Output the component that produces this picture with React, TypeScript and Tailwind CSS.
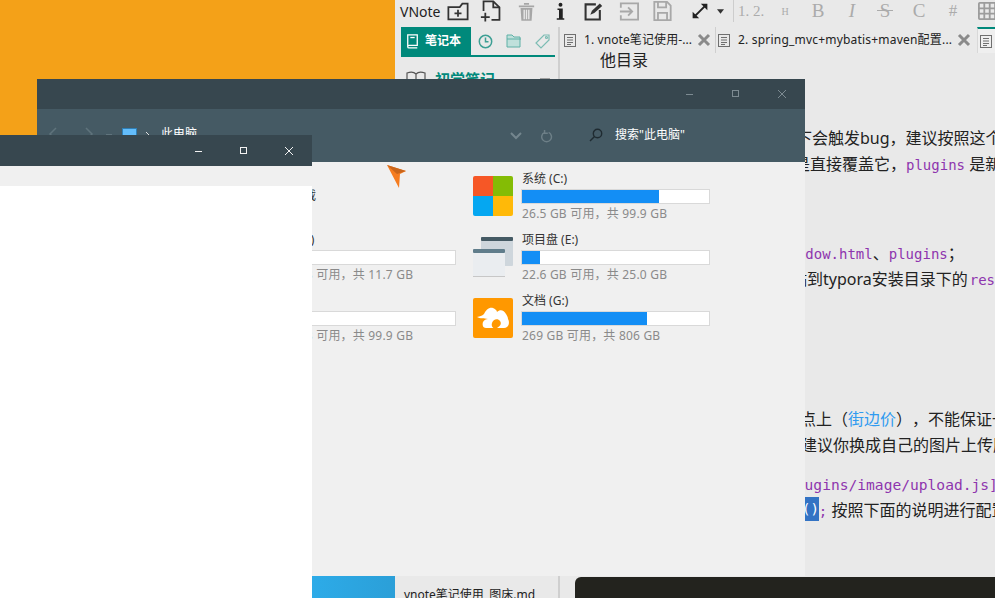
import React from 'react';

const ui = 'font-["Noto_Sans","Noto_Sans_CJK_SC",sans-serif]';
const mono = 'font-["DejaVu_Sans_Mono","Noto_Sans_CJK_SC",monospace] text-[14px] text-[#8e35ae]';

function DocIcon() {
  return (
    <svg width="14" height="16" viewBox="0 0 14 16" fill="none" stroke="#6f6f6f" strokeWidth="1" className="shrink-0">
      <rect x="1.5" y="2.5" width="11" height="12" />
      <path d="M4 5.5h6M4 8h6M4 10.5h6M4 12.5h4" />
    </svg>
  );
}

function CloseIcon() {
  return (
    <svg width="14" height="14" viewBox="0 0 14 14" stroke="#8a8a8a" strokeWidth="3" className="shrink-0">
      <path d="M2 2l10 10M12 2L2 12" />
    </svg>
  );
}

function ToolBox({ w, className, children }: { w: number; className?: string; children: React.ReactNode }) {
  return (
    <div className={`flex shrink-0 items-center justify-center ${className ?? ''}`} style={{ width: w }}>
      {children}
    </div>
  );
}

function Toolbar() {
  const label = 'font-["Liberation_Serif",serif] text-[#ababab]';
  return (
    <div className="flex h-[22px] items-center">
      <span className="w-[46px] shrink-0 pl-[5px] text-[14px] text-[#222]">VNote</span>
      <ToolBox w={34}>
        <svg width="24" height="21" viewBox="0 0 26 24" fill="none" stroke="#333" strokeWidth="2">
          <path d="M2 7h13l3-4h6v18H2z" />
          <path d="M9 14h8M13 10v8" />
        </svg>
      </ToolBox>
      <ToolBox w={33}>
        <svg width="23" height="22" viewBox="0 0 26 24" fill="none" stroke="#333" strokeWidth="2">
          <path d="M4 12V1h11l7 7v14h-9" />
          <path d="M15 1v7h7" />
          <path d="M1 19h10M6 14v10" />
        </svg>
      </ToolBox>
      <ToolBox w={36}>
        <svg width="17" height="19" viewBox="0 0 20 22" fill="#a6a6a6">
          <path d="M1 4h18v2H1zM7 1h6v2H7z" />
          <path d="M3 7h14l-1 15H4zM6.500 9v11h1.600V9zM9.200 9v11h1.600V9zM11.900 9v11h1.600V9z" fillRule="evenodd" />
        </svg>
      </ToolBox>
      <ToolBox w={32}>
        <svg width="9" height="21" viewBox="0 0 12 24" fill="#222">
          <circle cx="6" cy="3" r="2.600" />
          <path d="M2 8h7v13h2v2H1v-2h3V10H2z" />
        </svg>
      </ToolBox>
      <ToolBox w={35}>
        <svg width="19" height="19" viewBox="0 0 24 24" fill="none" stroke="#333" strokeWidth="2.600">
          <path d="M15 3H2v19h18V10" />
          <path d="M8 16l2-5L20 2l3 3-10 9z" fill="#333" stroke="none" />
        </svg>
      </ToolBox>
      <ToolBox w={35}>
        <svg width="20" height="19" viewBox="0 0 22 20" fill="none" stroke="#a8a8a8" strokeWidth="2">
          <path d="M2 6V1h19v18H2v-5" />
          <path d="M1 10h13M10 5.500l4.500 4.500-4.500 4.500" />
        </svg>
      </ToolBox>
      <ToolBox w={33}>
        <svg width="19" height="20" viewBox="0 0 20 22" fill="none" stroke="#a8a8a8" strokeWidth="2">
          <path d="M1 1h14l4 4v16H1z" />
          <path d="M5 1v6h9V1M5 21v-8h10v8" />
        </svg>
      </ToolBox>
      <ToolBox w={33} className="ml-[4px]">
        <svg width="18" height="18" viewBox="0 0 22 22" fill="#222" stroke="#222">
          <path d="M5 17L17 5" strokeWidth="2.400" />
          <path d="M12 2h8v8zM2 12v8h8z" stroke="none" />
        </svg>
      </ToolBox>
      <ToolBox w={8}>
        <svg width="7" height="5" viewBox="0 0 8 5" fill="#333">
          <path d="M0 0h8L4 5z" />
        </svg>
      </ToolBox>
      <div className="ml-[9px] h-[22px] w-px shrink-0 bg-[#cdcdcd]" />
      <span className={`ml-[4px] w-[39px] shrink-0 text-[15px] ${label}`}>1. 2.</span>
      <span className={`w-[16px] shrink-0 text-center text-[10px] ${label}`}>H</span>
      <span className={`ml-[17px] w-[16px] shrink-0 text-center text-[19px] ${label}`}>B</span>
      <span className={`ml-[18px] w-[16px] shrink-0 text-center text-[19px] italic ${label}`}>I</span>
      <span className={`relative ml-[17px] w-[16px] shrink-0 text-center text-[19px] ${label}`}>
        S
        <span className="absolute top-[13px] left-0 h-px w-[16px] bg-[#ababab]" />
      </span>
      <span className={`ml-[18px] w-[16px] shrink-0 text-center text-[19px] ${label}`}>C</span>
      <span className={`ml-[18px] w-[16px] shrink-0 text-center text-[17px] ${label}`}>#</span>
      <div className="ml-[17px] shrink-0">
        <svg width="18" height="18" viewBox="0 0 20 20" fill="none" stroke="#9c9c9c" strokeWidth="2">
          <rect x="1" y="1" width="18" height="18" rx="1" />
          <path d="M7 1v18M13 1v18M1 7h18M1 13h18" />
        </svg>
      </div>
    </div>
  );
}

function SidePanel() {
  return (
    <div className="flex w-[163px] shrink-0 flex-col">
      <div className="ml-[6px] flex h-[30px] w-[154px] border-b-2 border-[#00897b]">
        <div className="flex h-[28px] w-[70px] shrink-0 items-center gap-[6px] whitespace-nowrap bg-[#00897b] pl-[5px] text-[12px] font-bold text-white">
          <svg width="13" height="16" viewBox="0 0 15 18" fill="none" stroke="#fff" strokeWidth="1.500" className="shrink-0">
            <path d="M2 16V2h11v12H3.500a1.500 1.500 0 0 0 0 3H13" />
            <path d="M5 5h5" />
          </svg>
          <span>笔记本</span>
        </div>
        <div className="flex h-[28px] items-center gap-[13px] pl-[7px]">
          <svg width="15" height="15" viewBox="0 0 15 15" fill="none" stroke="#3d9f94" strokeWidth="1.500">
            <circle cx="7.500" cy="7.500" r="6.200" />
            <path d="M7.500 3.500v4.300h3" />
          </svg>
          <svg width="16" height="14" viewBox="0 0 16 14" fill="#bfe0db" stroke="#5fb0a6" strokeWidth="1">
            <path d="M1 13V1h5l2 2h6v10z" />
            <path d="M1 5h14" fill="none" />
          </svg>
          <svg width="15" height="15" viewBox="0 0 15 15" fill="none" stroke="#7cbcb3" strokeWidth="1.200">
            <path d="M9 1h5v5l-8 8-5-5z" />
            <circle cx="11.500" cy="3.500" r="1" />
          </svg>
        </div>
      </div>
      <div className="mt-[12px] flex items-center">
        <svg className="ml-[11px]" width="20" height="16" viewBox="0 0 20 16" fill="none" stroke="#555" strokeWidth="1.200">
          <path d="M10 3C8 1 4 1 1 2v13c3-1 7-1 9 0 2-1 6-1 9 0V2c-3-1-7-1-9 1v12" />
        </svg>
        <span className="ml-[9px] text-[15px] font-bold leading-[20px] text-[#00897b]">初学笔记</span>
        <div className="mt-[1px] ml-[45px] h-[3px] w-[10px] bg-[#a0a0a0]" />
      </div>
      <div className="mt-auto h-[12px] pl-[9px] text-[12px] leading-[18px] whitespace-nowrap text-[#222]">
        vnote笔记使用_图床.md
      </div>
    </div>
  );
}

function Tabs() {
  return (
    <div className="flex h-[26px]">
      <div className="flex w-[156px] items-center border-r border-[#cfcfcf] pl-[3px]">
        <DocIcon />
        <span className="ml-[7px] w-[113px] whitespace-nowrap text-[12px] tracking-[0.1px] text-[#222]">1. vnote笔记使用-...</span>
        <CloseIcon />
      </div>
      <div className="flex w-[261px] items-center pl-[1px]">
        <DocIcon />
        <span className="ml-[7px] w-[219px] whitespace-nowrap text-[12px] tracking-[0.2px] text-[#222]">2. spring_mvc+mybatis+maven配置...</span>
        <CloseIcon />
      </div>
      <div className="flex flex-1 items-center border-t-2 border-l border-t-[#00897b] border-l-[#d8d8d8] bg-[#efefef] pl-[1px]">
        <DocIcon />
      </div>
    </div>
  );
}

function Content() {
  const line = 'h-[26px] whitespace-nowrap leading-[26px]';
  return (
    <div className="absolute top-[47px] left-0 text-[16px] text-[#222] [text-spacing-trim:space-all]">
      <div className={`${line} ml-[205px]`}>他目录</div>
      <div className={`${line} ml-[401px] mt-[52px]`}>下会触发bug，建议按照这个</div>
      <div className={`${line} ml-[399px]`}>
        是直接覆盖它，<span className={mono}>plugins</span> 是新
      </div>
      <div className={`${line} ml-[385px] mt-[63px]`}>
        <span className={mono}>window.html</span>、<span className={mono}>plugins</span>；
      </div>
      <div className={`${line} ml-[380px]`}>
        粘贴到typora安装目录下的<span className={`${mono} ml-[2px]`}>resources</span>
      </div>
      <div className={`${line} ml-[405px] mt-[114px]`}>
        点上（<span className="text-[#2f9bf0]">街边价</span>），不能保证一
      </div>
      <div className={`${line} ml-[406px]`}>建议你换成自己的图片上传服</div>
      <div className={`${line} ml-[392px] mt-[13px]`}>
        <span className={`${mono} !text-[14.600px]`}>plugins/image/upload.js]</span>
      </div>
      <div className={`${line} ml-[407px]`}>
        <span className={`${mono} inline-block h-[24px] bg-[#3373c4] align-top leading-[24px] !text-white`}>()</span>
        <span className={mono}>;</span> 按照下面的说明进行配置
      </div>
    </div>
  );
}

function VNoteWindow() {
  return (
    <div className="absolute top-0 right-0 bottom-0 left-[395px] flex flex-col overflow-hidden bg-[#e9e9e9]">
      <Toolbar />
      <div className="mt-[5px] flex flex-1">
        <SidePanel />
        <div className="flex flex-1 flex-col border-l-2 border-[#cfcfcf]">
          <Tabs />
          <div className="mt-auto ml-[15px] h-[21px] rounded-tl-[6px] bg-[#23231e]" />
        </div>
      </div>
      <Content />
    </div>
  );
}

function WinControls({ color, gap }: { color: string; gap: string }) {
  return (
    <div className={`flex items-center ${gap}`}>
      <svg width="10" height="10" viewBox="0 0 10 10" stroke={color}>
        <path d="M1 5.500h7" />
      </svg>
      <svg width="10" height="10" viewBox="0 0 10 10" fill="none" stroke={color}>
        <rect x="1.500" y="1.500" width="6" height="6" />
      </svg>
      <svg width="10" height="10" viewBox="0 0 10 10" stroke={color}>
        <path d="M1 1l8 8M9 1L1 9" />
      </svg>
    </div>
  );
}

function WinLogo() {
  return (
    <svg width="40" height="40" viewBox="0 0 40 40">
      <path d="M2 0h18v20H0V2a2 2 0 0 1 2-2z" fill="#f65726" />
      <path d="M20 0h18a2 2 0 0 1 2 2v18H20z" fill="#84bc05" />
      <path d="M0 20h20v20H2a2 2 0 0 1-2-2z" fill="#05a7f1" />
      <path d="M20 20h20v18a2 2 0 0 1-2 2H20z" fill="#ffb908" />
    </svg>
  );
}

function StackIcon() {
  return (
    <svg width="40" height="40" viewBox="0 0 40 40">
      <rect x="8" y="0" width="32" height="29" rx="1" fill="#ced6dc" />
      <rect x="8" y="0" width="32" height="4" rx="1" fill="#455a64" />
      <rect x="0" y="12" width="32" height="28" rx="1" fill="#eaedf0" />
      <rect x="0" y="12" width="32" height="4" rx="1" fill="#607d8b" />
      <rect x="0" y="39" width="32" height="1" fill="#c7c7c7" />
    </svg>
  );
}

function CloudIcon() {
  return (
    <svg width="40" height="40" viewBox="0 0 40 40">
      <rect width="40" height="40" rx="2" fill="#ff9800" />
      <path
        d="M4 19C7 18 9 18 11 16C13 12 16 9 20 10C22 11 24 12 24 14C27 11 31 12 33 16C34 18 35 19 35 21C37 24 36 30 31 30L24 30C27 28 29 26 27 23C25 20 20 21 19 25C18 28 20 30 21 30L13 30C10 30 9 27 10 24C11 22 13 21 15 21C11 20 7 21 4 19Z"
        fill="#fff"
      />
    </svg>
  );
}

function Bar({ used }: { used: number }) {
  return (
    <div className="h-[15px] w-[189px] border border-[#d9d9d9] bg-white">
      <div className="h-full bg-[#138ef5]" style={{ width: used }} />
    </div>
  );
}

function Drive({ icon, title, info, used }: { icon: React.ReactNode; title: string; info: string; used: number }) {
  return (
    <div className="flex h-[61px] w-[254px] gap-[8px]">
      <div className="size-[40px] shrink-0">{icon}</div>
      <div className="-mt-[6px]">
        <div className="h-[19px] pl-[1px] text-[12px] leading-[18px] text-[#333]">{title}</div>
        <Bar used={used} />
        <div className="mt-[1px] h-[18px] pl-[1px] text-[12px] leading-[18px] tracking-[0.2px] whitespace-nowrap text-[#8a8a8a]">{info}</div>
      </div>
    </div>
  );
}

function ExplorerWindow() {
  return (
    <div className="absolute top-[79px] left-[37px] flex h-[497px] w-[768px] flex-col bg-[#f0f0f0]">
      <div className="flex h-[30px] shrink-0 items-center justify-end bg-[#37474f] pr-[18px]">
        <WinControls color="#7d8b92" gap="gap-[36px]" />
      </div>
      <div className="flex h-[53px] shrink-0 items-start bg-[#455a64] pt-[17px]">
        <svg className="mt-[1px] ml-[11px] shrink-0" width="10" height="14" viewBox="0 0 10 14" fill="none" stroke="#5f737c" strokeWidth="1.500">
          <path d="M8 1L2 7l6 6" />
        </svg>
        <svg className="mt-[1px] ml-[26px] shrink-0" width="10" height="14" viewBox="0 0 10 14" fill="none" stroke="#5f737c" strokeWidth="1.500">
          <path d="M2 1l6 6-6 6" />
        </svg>
        <div className="mt-[8px] ml-[12px] h-[3px] w-[6px] shrink-0 bg-[#5f737c]" />
        <div className="mt-[2px] ml-[10px] h-[16px] w-[15px] shrink-0 border border-[#2f7fb5] bg-[#63bdfb]" />
        <svg className="mt-[5px] ml-[8px] shrink-0" width="6" height="8" viewBox="0 0 6 8" fill="none" stroke="#e0e0e0">
          <path d="M1 1l3 3-3 3" />
        </svg>
        <span className="ml-[10px] w-[36px] shrink-0 text-[12px] leading-[16px] text-white">此电脑</span>
        <svg className="mt-[6px] ml-[313px] shrink-0" width="12" height="8" viewBox="0 0 12 8" fill="none" stroke="#74868e" strokeWidth="2">
          <path d="M1 1l5 5 5-5" />
        </svg>
        <svg className="mt-[4px] ml-[19px] shrink-0" width="12" height="13" viewBox="0 0 14 16" fill="none" stroke="#6d7f87" strokeWidth="1.800">
          <path d="M4 3a6 6 0 1 0 5 0M4 0v4h4" />
        </svg>
        <svg className="mt-[2px] ml-[36px] shrink-0" width="14" height="14" viewBox="0 0 14 14" fill="none" stroke="#1f2b31" strokeWidth="1.400">
          <circle cx="8.500" cy="5.500" r="4.200" />
          <path d="M5.500 8.500L1 13" />
        </svg>
        <span className="ml-[12px] text-[12px] leading-[18px] whitespace-nowrap text-white">搜索"此电脑"</span>
      </div>
      <div className="grid grid-cols-[254px_254px] pt-[14px] pl-[182px]">
        <div className="h-[61px] pt-[11px] pl-[49px]">
          <span className="block text-[12px] leading-[18px] text-[#333]">软件下载</span>
        </div>
        <Drive icon={<WinLogo />} title="系统 (C:)" info="26.5 GB 可用，共 99.9 GB" used={137} />
        <Drive icon={<div />} title="软件 (D:)" info="10.6 GB 可用，共 11.7 GB" used={30} />
        <Drive icon={<StackIcon />} title="项目盘 (E:)" info="22.6 GB 可用，共 25.0 GB" used={18} />
        <Drive icon={<div />} title="软件 (F:)" info="69.0 GB 可用，共 99.9 GB" used={30} />
        <Drive icon={<CloudIcon />} title="文档 (G:)" info="269 GB 可用，共 806 GB" used={125} />
      </div>
    </div>
  );
}

function BlankWindow() {
  return (
    <div className="absolute top-[135px] bottom-0 left-0 flex w-[312px] flex-col">
      <div className="flex h-[31px] shrink-0 items-center justify-end bg-[#37474f] pr-[18px]">
        <WinControls color="#f2f2f2" gap="gap-[35px]" />
      </div>
      <div className="h-[20px] shrink-0 bg-[#f0f0f0]" />
      <div className="flex-1 bg-white" />
    </div>
  );
}

export default function App() {
  return (
    <div className={`relative h-[598px] w-[995px] overflow-hidden bg-[#f4a118] ${ui}`}>
      <VNoteWindow />
      <div className="absolute top-[576px] bottom-0 left-[312px] w-[83px] bg-gradient-to-r from-[#2dabe8] to-[#2b9fd8]" />
      <ExplorerWindow />
      <BlankWindow />
      <svg className="absolute top-[165px] left-[387px]" width="20" height="23" viewBox="0 0 20 23">
        <path d="M0 0l19 6-6 3-1 14z" fill="#f57c1f" />
        <path d="M0 0l19 6-9 3z" fill="#c9651a" />
      </svg>
    </div>
  );
}
